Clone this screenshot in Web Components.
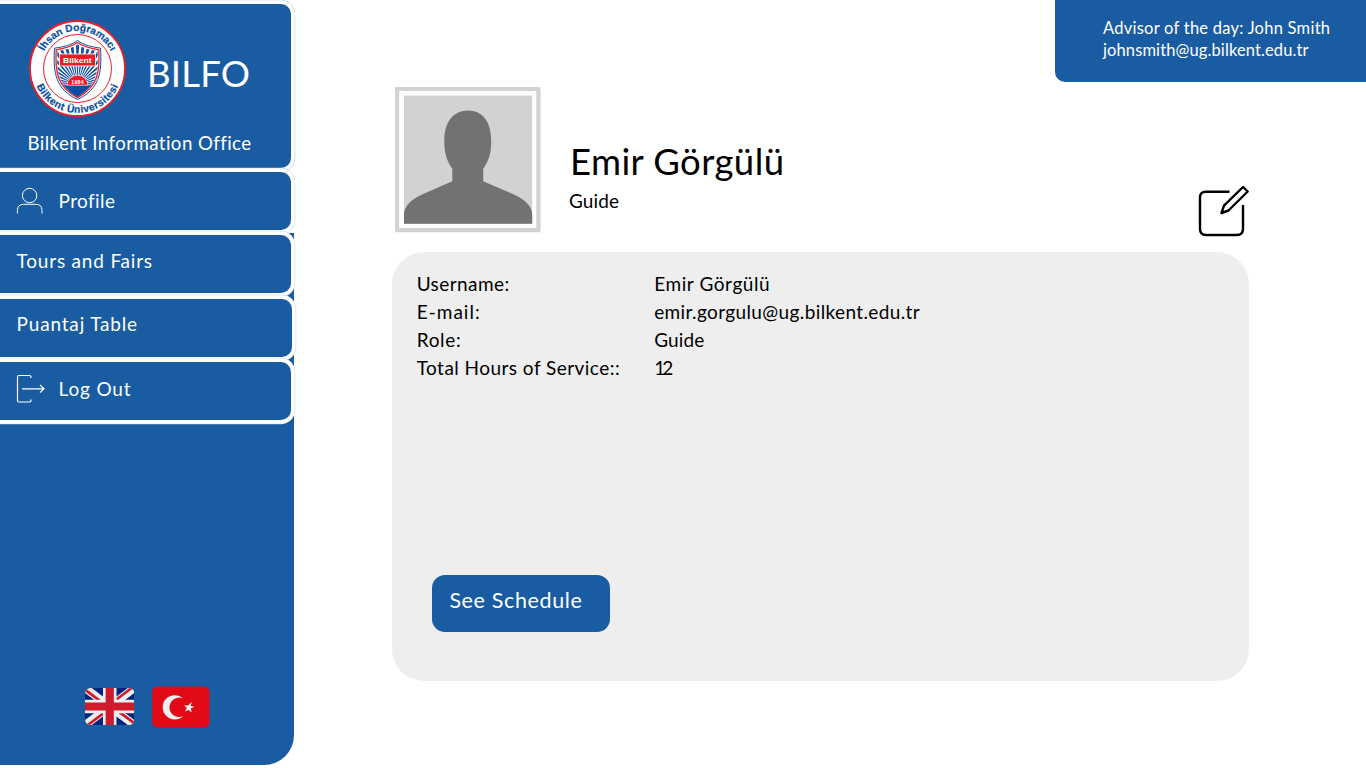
<!DOCTYPE html>
<html lang="en">
<head>
<meta charset="utf-8">
<title>BILFO – Profile</title>
<style>
html,body{margin:0;height:100%;background:#fff;overflow:hidden}
body{font-family:Lato,"Open Sans",sans-serif;color:#000}
</style>
</head>
<body>
<bilfo-app></bilfo-app>
<script>
const define = (name, html, setup) => customElements.define(name, class extends HTMLElement {
  constructor(){ super(); this.attachShadow({mode:'open'}).innerHTML = html; }
  connectedCallback(){ if (setup) setup(this); }
});

/* A single line of text tracked out to the width given in "w". */
define('track-text', `<style>:host{display:block;white-space:pre;flex:none}span{display:inline-block}</style><span><slot></slot></span>`, el => {
  const span = el.shadowRoot.querySelector('span');
  const w = parseFloat(el.getAttribute('w'));
  const size = el.getAttribute('size');
  if (size) el.style.fontSize = size + 'px';
  const natural = span.getBoundingClientRect().width;
  if (w && natural) el.style.letterSpacing = ((w - natural) / (el.textContent.length - 1)).toFixed(3) + 'px';
});

let rays = '';
for (let i = -11; i <= 11; i++) {
  const a = (i * 8.2 - 90) * Math.PI / 180, b = 2.2 * Math.PI / 180;
  const p = t => (48.5 + 50 * Math.cos(t)).toFixed(1) + ' ' + (65 + 50 * Math.sin(t)).toFixed(1);
  rays += `<path d="M48.5 65L${p(a-b)}L${p(a+b)}Z"/>`;
}
define('bilkent-crest', `<style>:host{display:block;width:97px;height:97px;flex:none}svg{display:block}text{font-family:"Liberation Sans",Arial,sans-serif;font-weight:700}</style>
<svg width="97" height="97" viewBox="0 0 97 97">
<defs><path id="top" d="M15.12 31.3A37.6 37.6 0 0 1 81.9 31.3"/><path id="bot" d="M7.7 66A44.4 44.4 0 0 0 89.3 66"/>
<clipPath id="sh"><path d="M48.5 24.5C43 28.5 35 30 28.5 31C27.5 51 29 66 48.5 77C68 66 69.500 51 68.5 31C62 30 54 28.500 48.5 24.500Z"/></clipPath></defs>
<circle cx="48.500" cy="48.500" r="47.500" fill="#fff" stroke="#ee1c25" stroke-width="1.800"/>
<circle cx="48.500" cy="48.500" r="34" fill="none" stroke="#ee1c25"/>
<path d="M48.500 20.500C42 25.500 33 27 25.500 28.200C24 53 26.500 69 48.500 79.500C70.500 69 73 53 71.500 28.200C64 27 55 25.500 48.500 20.500Z" fill="#fff" stroke="#0b4ea2" stroke-width="1"/>
<path d="M48.500 22.600C42.500 27 34 28.700 27.200 29.800C26 52 28 67 48.500 77.600C69 67 71 52 69.800 29.800C63 28.700 54.500 27 48.500 22.600Z" fill="#fff" stroke="#ee1c25" stroke-width="1.300"/>
<g clip-path="url(#sh)" fill="#0b4ea2">${rays}<path d="M20 65.200h60v20H20z"/></g>
<path d="M38 65.200a10.500 10 0 0 1 21 0z" fill="#ee1c25" stroke="#fff" stroke-width=".6"/>
<rect x="30.500" y="34" width="36" height="12" fill="#ee1c25" stroke="#fff" stroke-width=".8"/>
<text x="34" y="43.200" font-size="7.600" fill="#fff" textLength="28.500" lengthAdjust="spacingAndGlyphs">Bilkent</text>
<text x="42.200" y="63.800" font-size="5.200" fill="#fff" textLength="12.500">1984</text>
<g font-size="10.200" fill="#0b4ea2" stroke="#0b4ea2" stroke-width=".2"><text textLength="82" lengthAdjust="spacing"><textPath href="#top">İhsan Doğramacı</textPath></text>
<text textLength="103" lengthAdjust="spacing"><textPath href="#bot">Bilkent Üniversitesi</textPath></text></g>
</svg>`);

define('side-brand', `<style>:host{display:flex;flex-direction:column;box-sizing:border-box;width:291px;height:163.500px;background:#1a5ca2;border-radius:0 10px 10px 0;box-shadow:0 0 0 3.700px #fff,0 0 0 4.200px #b5cae0;padding:16px 0 0 29px;color:#fff}
.row{display:flex;align-items:flex-start}.row track-text{margin:30.500px 0 0 21px;line-height:44px}.sub{line-height:24px;margin:13.500px 0 0 -1.500px}</style>
<div class="row"><bilkent-crest></bilkent-crest><track-text size="36.500" w="103">BILFO</track-text></div>
<track-text class="sub" size="18.700" w="223">Bilkent Information Office</track-text>`);

define('side-item', `<style>:host{display:flex;align-items:center;box-sizing:border-box;width:291px;height:58px;background:#1a5ca2;border-radius:0 10px 10px 0;box-shadow:0 0 0 3.700px #fff,0 0 0 4.200px #c5d5e6;padding-left:16px;color:#fff;line-height:24px}
::slotted(track-text){margin-top:var(--shift,0);margin-left:.600px}::slotted(svg){flex:none;margin-right:14px}</style><slot name="icon"></slot><slot></slot>`);

define('side-flags', `<style>:host{display:flex;align-items:center;gap:18px;padding-left:84.500px}svg{display:block}.uk{margin-top:-1px}</style>
<svg class="uk" width="49.500" height="37" viewBox="0 0 49.500 37"><defs><clipPath id="r"><rect width="49.500" height="37" rx="5.500"/></clipPath></defs><g clip-path="url(#r)">
<path fill="#00247d" d="M0 0h50v37H0z"/><path d="M0 0L49.500 37M49.500 0L0 37" stroke="#eee" stroke-width="8"/>
<path d="M0 1.700L20 16.600M49.500 35.300L29.500 20.400M48 -1L28 14M1.500 38L21.500 23" stroke="#cf1b2b" stroke-width="2.700"/>
<path d="M24.750 0v37M0 18.500h49.500" stroke="#eee" stroke-width="13.500"/><path d="M24.750 0v37M0 18.500h49.500" stroke="#cf1b2b" stroke-width="8.200"/></g></svg>
<svg width="58" height="42" viewBox="0 0 58 42"><rect x=".3" y=".5" width="57.200" height="41" rx="5" fill="#e30a17"/>
<path d="M31 12.400A12.100 12.100 0 1 0 31 30.200A9.700 9.700 0 1 1 31 12.400Z" fill="#eee"/>
<path d="M39.700 16L38.700 19.700L42.400 20.800L38.900 22.600L39.700 26.600L36.600 23.900L33 25.600L34.800 22.100L32 19.300L36 19.600Z" fill="#eee"/></svg>`);

define('side-bar', `<style>:host{display:flex;flex-direction:column;box-sizing:border-box;height:764.600px;width:294px;padding-top:4px;border-radius:0 0 30px 0;background:linear-gradient(#fff 233px,#1a5ca2 233px)}
side-item{flex:none}side-brand{flex:none}side-flags{margin-top:auto;margin-bottom:37px}</style>
<side-brand></side-brand>
<side-item style="margin-top:4.500px;--shift:0px"><svg slot="icon" width="28" height="30" viewBox="0 0 28 30" fill="none" stroke="#fff" stroke-width="1"><circle cx="13.600" cy="9.500" r="7.200"/><path d="M1.400 27.500V24.500Q1.400 18.300 7.500 18.300H20Q26 18.300 26 24.500V27.500"/></svg><track-text size="19" w="56">Profile</track-text></side-item>
<side-item style="margin-top:5px;--shift:-6px"><track-text size="19" w="135.500">Tours and Fairs</track-text></side-item>
<side-item style="margin-top:5.500px;width:292px;--shift:-7px"><track-text size="19" w="120.500">Puantaj Table</track-text></side-item>
<side-item style="margin-top:5px;--shift:-3px"><svg slot="icon" style="margin-right:12px;margin-top:-3px" width="30" height="30" viewBox="0 0 30 30" fill="none" stroke="#fff" stroke-width="1.200"><path d="M15 4V3Q15 1.500 13.500 1.500H3Q1.500 1.500 1.500 3V26.500Q1.500 28 3 28H13.500Q15 28 15 26.500V25.500M6 14.800H28M24 11L28 14.800L24 18.600"/></svg><track-text size="19" w="72">Log Out</track-text></side-item>
<side-flags></side-flags>`);

define('advisor-box', `<style>:host{display:block;box-sizing:border-box;width:311px;height:82px;background:#1a5ca2;border-radius:0 0 0 10px;color:#fff;padding:17px 0 0 48px;line-height:22px}</style>
<track-text size="16.500" w="227">Advisor of the day: John Smith</track-text><track-text size="16.500" w="205.500">johnsmith@ug.bilkent.edu.tr</track-text>`);

define('user-avatar', `<style>:host{display:block;flex:none;width:146px;height:146px}svg{display:block}</style>
<svg width="146" height="146" viewBox="0 0 146 146"><path fill="#d1d3d2" d="M0 0h145.500v145.300H0z"/><path fill="#fff" d="M4.200 4h137.100v137.100H4.200z"/><path fill="#d1d3d2" d="M9 8.500h128.200v128.300H9z"/>
<path fill="#717274" d="M73 23.500C87.500 23.500 96.200 34.500 96.200 54C96.200 68 93.500 73.500 88.200 82V94.300L115 105.800C129 111.500 137.200 118.500 137.200 128V136.800H9V128C9 118.500 17 111.500 31 105.800L57.300 94.300V82C52 73.500 49.300 68 49.300 54C49.300 34.500 58.500 23.500 73 23.500Z"/></svg>`);

define('profile-head', `<style>:host{display:flex;height:146px}.who{padding:52.500px 0 0 28px;flex:1}.name{line-height:44px;margin-left:1px}.role{line-height:24px;margin-top:6px}.edit{margin:96px 0 0;flex:none}</style>
<user-avatar></user-avatar><div class="who"><track-text class="name" size="36.500" w="214">Emir Görgülü</track-text><track-text class="role" size="19" w="50">Guide</track-text></div>
<svg class="edit" width="52" height="54" viewBox="0 0 52 54" fill="none" stroke="#000" stroke-width="2.400" stroke-linejoin="round"><path d="M31.500 8.700H8Q2 8.700 2 14.700V46Q2 52 8 52H39Q45 52 45 46V22"/><path d="M45 4L49.700 8.500L30.500 27.500L23.500 30L26 22.700Z"/></svg>`);

define('info-row', `<style>:host{display:grid;grid-template-columns:237.500px 1fr;line-height:28px}</style><slot name="k"></slot><slot></slot>`);
define('blue-button', `<style>:host{display:block}button{display:block;box-sizing:border-box;width:178px;height:56.500px;border:0;border-radius:13px;background:#1a5ca2;color:#fff;font:21.500px/28px Lato,sans-serif;padding:0 0 7px 17.400px;text-align:left}</style><button><slot></slot></button>`);
define('info-card', `<style>:host{display:flex;flex-direction:column;box-sizing:border-box;width:856.500px;height:429px;background:#eee;border-radius:32px;padding:17.700px 24px 49.500px 24.700px}blue-button{margin:auto 0 0 15.300px}</style>
<info-row><track-text slot="k" size="19" w="92.500">Username:</track-text><track-text size="19" w="115.500">Emir Görgülü</track-text></info-row>
<info-row><track-text slot="k" size="19" w="63">E-mail:</track-text><track-text size="19" w="265.500">emir.gorgulu@ug.bilkent.edu.tr</track-text></info-row>
<info-row><track-text slot="k" size="19" w="44">Role:</track-text><track-text size="19" w="50">Guide</track-text></info-row>
<info-row><track-text slot="k" size="19" w="203">Total Hours of Service::</track-text><track-text size="19" w="19">12</track-text></info-row>
<blue-button><track-text size="21.500" w="132.500">See Schedule</track-text></blue-button>`);

define('bilfo-app', `<style>:host{display:grid;grid-template-columns:294px 1fr;height:768px;width:1366px}main{display:flex;flex-direction:column;align-items:flex-start}advisor-box{align-self:flex-end}profile-head{width:855px;margin:4.700px 0 0 101px}info-card{margin:19.600px 0 0 98px}side-bar{position:relative;z-index:1}</style>
<side-bar></side-bar><main><advisor-box></advisor-box><profile-head></profile-head><info-card></info-card></main>`);
</script>
</body>
</html>
